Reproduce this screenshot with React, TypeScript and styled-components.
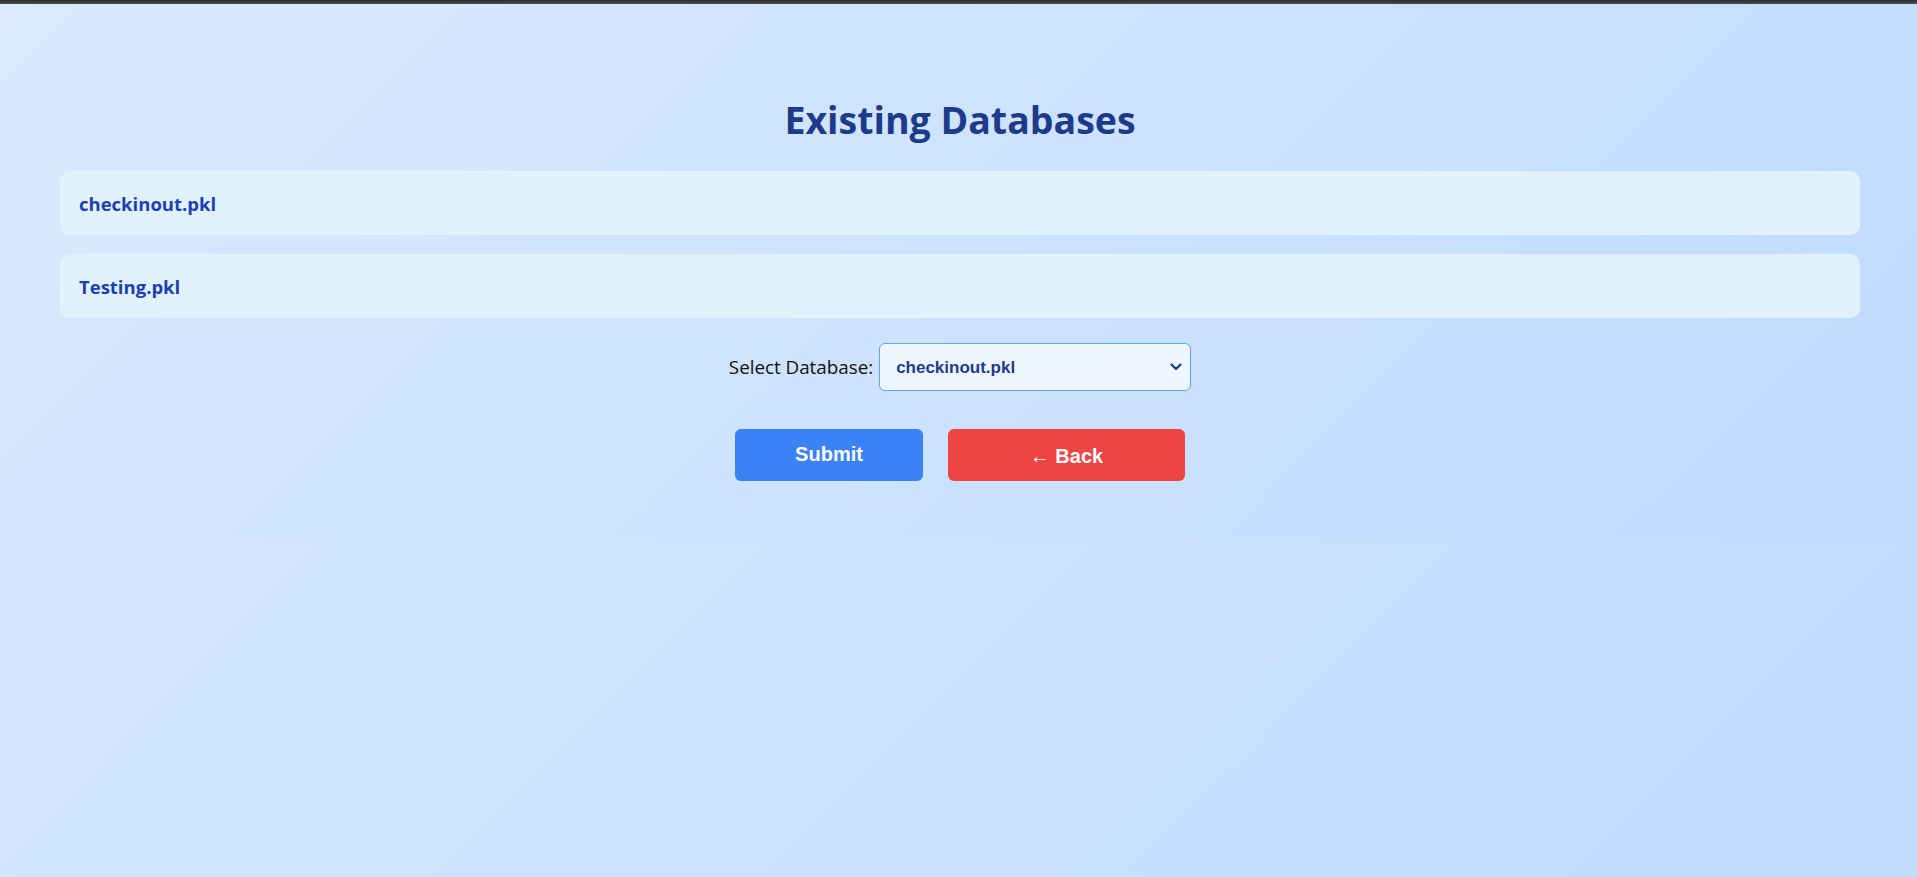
import React, { useState } from "react";
import styled, { createGlobalStyle } from "styled-components";

const Global = createGlobalStyle`
  html, body { margin: 0; padding: 0; }
  body {
    min-height: 100vh;
    background: linear-gradient(135deg, #dbeafe 0%, #bfdbfe 100%);
    font-family: "Open Sans", "Noto Sans", sans-serif;
  }
`;

const TopStrip = styled.div`
  height: 4px;
  background: linear-gradient(180deg, #2e2e2e 0%, #4a4a4a 100%);
`;

const Container = styled.div`
  background: linear-gradient(135deg, #dbeafe 0%, #bfdbfe 100%);
  padding: 92px 57px 60px 60px;
`;

const Title = styled.h2`
  margin: 0 0 27px;
  text-align: center;
  font-family: "Open Sans", "Noto Sans", sans-serif;
  font-size: 37.5px;
  line-height: 48px;
  font-weight: 700;
  color: #1e3a8a;
`;

const List = styled.ul`
  list-style: none;
  margin: 0;
  padding: 0;
  display: flex;
  flex-direction: column;
  gap: 19px;
`;

const Item = styled.li`
  background: #e0f2fe;
  border-radius: 10px;
  height: 64px;
  padding: 0 19px;
  display: flex;
  align-items: center;
  font-size: 18.5px;
  font-weight: 700;
  color: #1e40af;
`;

const SelectRow = styled.div`
  margin-top: 25px;
  display: flex;
  justify-content: center;
  align-items: center;
  gap: 6px;
`;

const Label = styled.label`
  font-size: 18.8px;
  color: #111;
`;

const SelectWrap = styled.div`
  position: relative;
  width: 312px;
  height: 48px;
`;

const Select = styled.select`
  appearance: none;
  width: 100%;
  height: 100%;
  box-sizing: border-box;
  padding: 0 30px 0 16px;
  border: 1px solid #60a5fa;
  border-radius: 6px;
  background: #eff6ff;
  color: #1e3a8a;
  font-family: "Liberation Sans", Arial, sans-serif;
  font-size: 17px;
  font-weight: 700;
  outline: none;
`;

const Chevron = styled.svg`
  position: absolute;
  right: 9px;
  top: 50%;
  transform: translateY(-50%);
  pointer-events: none;
`;

const Buttons = styled.div`
  margin-top: 38px;
  display: flex;
  justify-content: center;
  gap: 25px;
`;

const Button = styled.button<{ $bg: string; $w: number; $dy: number }>`
  width: ${(p) => p.$w}px;
  height: 52px;
  border: none;
  border-radius: 6px;
  background: ${(p) => p.$bg};
  color: #fff;
  font-family: "Liberation Sans", Arial, sans-serif;
  font-size: 20px;
  font-weight: 700;
  padding: ${(p) => (p.$dy > 0 ? `${p.$dy * 2}px 0 0` : `0 0 ${-p.$dy * 2}px`)};
  cursor: pointer;
`;

const dbs = ["checkinout.pkl", "Testing.pkl"];

export default function App() {
  const [db, setDb] = useState(dbs[0]);
  return (
    <>
      <Global />
      <TopStrip />
      <Container>
        <Title>Existing Databases</Title>
        <List>
          {dbs.map((d) => (
            <Item key={d}>{d}</Item>
          ))}
        </List>
        <SelectRow>
          <Label htmlFor="db">Select Database:</Label>
          <SelectWrap>
            <Select id="db" value={db} onChange={(e) => setDb(e.target.value)}>
              {dbs.map((d) => (
                <option key={d} value={d}>
                  {d}
                </option>
              ))}
            </Select>
            <Chevron width="12" height="8" viewBox="0 0 12 8">
              <path d="M1.5 1.5 L6 6 L10.5 1.5" fill="none" stroke="#1e3a8a" strokeWidth="2.2" strokeLinecap="round" strokeLinejoin="round" />
            </Chevron>
          </SelectWrap>
        </SelectRow>
        <Buttons>
          <Button $bg="#3b82f6" $w={188} $dy={-1}>Submit</Button>
          <Button $bg="#ef4444" $w={237} $dy={1}>← Back</Button>
        </Buttons>
      </Container>
    </>
  );
}
